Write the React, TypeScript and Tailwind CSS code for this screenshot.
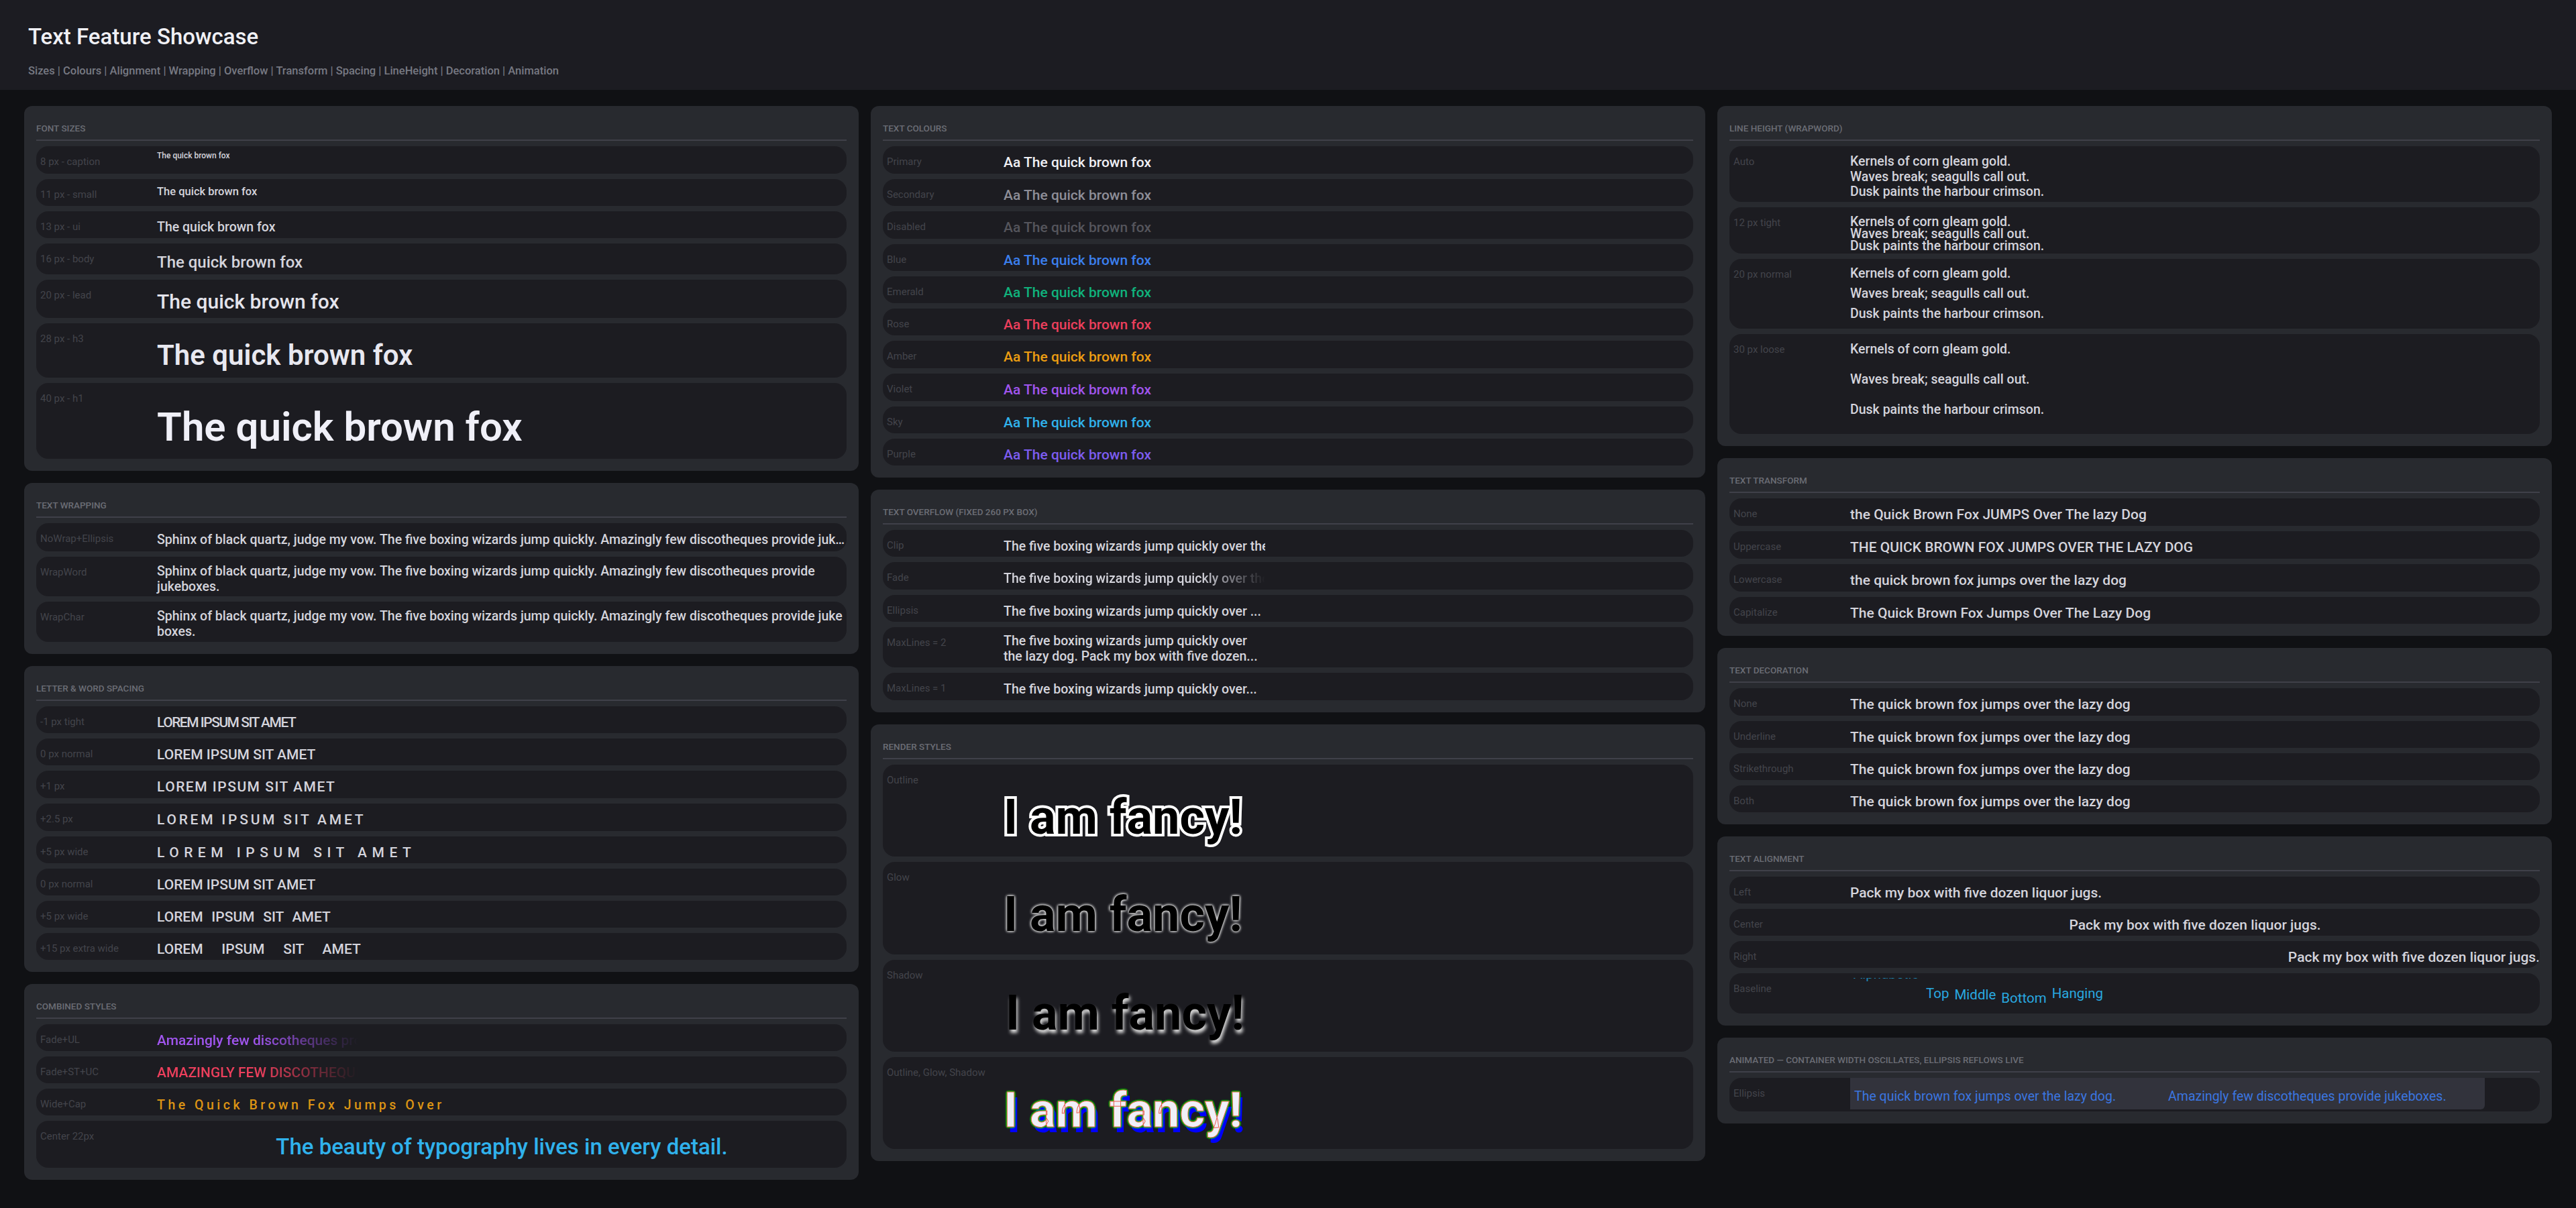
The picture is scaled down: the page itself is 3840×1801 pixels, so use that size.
import type { ReactNode } from 'react';

const FOX = 'The quick brown fox';
const LOREM = 'LOREM IPSUM SIT AMET';
const FIVE = 'The five boxing wizards jump quickly over the lazy dog. Pack my box with five dozen liquor jugs.';
const SPHINX =
  'Sphinx of black quartz, judge my vow. The five boxing wizards jump quickly. Amazingly few discotheques provide jukeboxes.';
const DECORATION = 'The quick brown fox jumps over the lazy dog';
const PACK = 'Pack my box with five dozen liquor jugs.';
const AMAZING = 'Amazingly few discotheques provide jukeboxes.';

function Panel({ title, children }: { title: string; children: ReactNode }) {
  return (
    <section className="rounded-[12px] bg-[#282a2f] px-[18px] pb-[18px] pt-[24px]">
      <h2 className="text-[13.5px] font-medium uppercase leading-[18px] text-[#6b6d75]">{title}</h2>
      <div className="mb-[8px] mt-[8px] h-[2px] bg-[#3f4049]" />
      <div className="flex flex-col gap-[8px]">{children}</div>
    </section>
  );
}

function Row({
  label,
  size = 'h-[40px]',
  top = 'pt-[12.5px]',
  children,
}: {
  label: string;
  size?: string;
  top?: string;
  children: ReactNode;
}) {
  return (
    <div className={`flex items-start overflow-hidden rounded-[18px] bg-[#1c1c21] ${size}`}>
      <div className="mt-[12.5px] w-[180px] shrink-0 whitespace-nowrap pl-[6px] text-[15px] leading-[20px] text-[#43444b]">
        {label}
      </div>
      <div className={`min-w-0 flex-1 text-[19.5px] font-medium leading-[23px] text-[#d4d4dc] ${top}`}>{children}</div>
    </div>
  );
}

const SIZE_ROWS = [
  { label: '8 px - caption', size: 'h-[41px]', top: 'pt-[7px]', text: 'text-[12px] leading-[14px]' },
  { label: '11 px - small', size: 'h-[40px]', top: 'pt-[9px]', text: 'text-[16.5px] leading-[20px]' },
  { label: '13 px - ui', size: 'h-[40px]', top: 'pt-[11.5px]', text: 'text-[19.5px] leading-[23px]' },
  { label: '16 px - body', size: 'h-[46px]', top: 'pt-[13.5px]', text: 'text-[24px] leading-[28px]' },
  { label: '20 px - lead', size: 'h-[57px]', top: 'pt-[15px]', text: 'text-[30px] leading-[35px] text-[#e4e4ec]' },
  { label: '28 px - h3', size: 'h-[81px]', top: 'pt-[22.5px]', text: 'text-[42px] font-semibold leading-[49px] text-[#e8e8f0]' },
  { label: '40 px - h1', size: 'h-[113px]', top: 'pt-[30.5px]', text: 'text-[60px] font-semibold leading-[70px] text-[#f0f0f8]' },
];

const COLOUR_ROWS = [
  { label: 'Primary', size: 'h-[41px]', text: 'text-[#f0f0f5]' },
  { label: 'Secondary', size: 'h-[40px]', text: 'text-[#8e8e98]' },
  { label: 'Disabled', size: 'h-[41px]', text: 'text-[#55555c]' },
  { label: 'Blue', size: 'h-[40px]', text: 'text-[#3b7fee]' },
  { label: 'Emerald', size: 'h-[40px]', text: 'text-[#10b27c]' },
  { label: 'Rose', size: 'h-[40px]', text: 'text-[#ec3f5c]' },
  { label: 'Amber', size: 'h-[41px]', text: 'text-[#ec9d12]' },
  { label: 'Violet', size: 'h-[41px]', text: 'text-[#a055ee]' },
  { label: 'Sky', size: 'h-[40px]', text: 'text-[#30b2ec]' },
  { label: 'Purple', size: 'h-[40px]', text: 'text-[#7c5cf0]' },
];

const SPACING_ROWS = [
  { label: '-1 px tight', size: 'h-[40px]', text: 'tracking-[-1.5px]' },
  { label: '0 px normal', size: 'h-[40px]', text: 'tracking-[0px]' },
  { label: '+1 px', size: 'h-[41px]', text: 'tracking-[1.5px]' },
  { label: '+2.5 px', size: 'h-[41px]', text: 'tracking-[3.75px]' },
  { label: '+5 px wide', size: 'h-[40px]', text: 'tracking-[7.5px]' },
  { label: '0 px normal', size: 'h-[40px]', text: '[word-spacing:0px]' },
  { label: '+5 px wide', size: 'h-[40px]', text: '[word-spacing:7.5px]' },
  { label: '+15 px extra wide', size: 'h-[40px]', text: '[word-spacing:22.5px]' },
];

const LINE_ROWS = [
  { label: 'Auto', size: 'h-[83px]', top: 'pt-[12px]', text: 'leading-[22.5px]' },
  { label: '12 px tight', size: 'h-[69px]', top: 'pt-[13px]', text: 'leading-[18px]' },
  { label: '20 px normal', size: 'h-[104px]', top: 'pt-[6.5px]', text: 'leading-[30px]' },
  { label: '30 px loose', size: 'h-[149px]', top: 'pt-[0px]', text: 'leading-[45px]' },
];

const FANCY = 'text-[72px] font-bold leading-[84px] whitespace-nowrap';
const LARGE = 'text-[21px]';

export default function App() {
  return (
    <div className="min-h-[1801px] bg-[#101114] [font-family:Roboto,sans-serif]">
      <header className="h-[134px] bg-[#1c1c22] pl-[42px] pt-[35px]">
        <h1 className="text-[33px] font-medium leading-[40px] text-[#f0f0f5]">Text Feature Showcase</h1>
        <p className="mt-[21px] text-[16.5px] font-medium leading-[20px] text-[#777982]">
          Sizes | Colours | Alignment | Wrapping | Overflow | Transform | Spacing | LineHeight | Decoration | Animation
        </p>
      </header>

      <main className="grid grid-cols-3 items-start gap-x-[18px] px-[36px] pt-[24px]">
        <div className="flex flex-col gap-[18px]">
          <Panel title="Font sizes">
            {SIZE_ROWS.map((row) => (
              <Row key={row.label} label={row.label} size={row.size} top={row.top}>
                <div className={row.text}>{FOX}</div>
              </Row>
            ))}
          </Panel>

          <Panel title="Text wrapping">
            <Row label="NoWrap+Ellipsis" size="h-[42px]">
              <div className="truncate">{SPHINX}</div>
            </Row>
            <Row label="WrapWord" size="h-[59px]" top="pt-[10px]">
              <div>{SPHINX}</div>
            </Row>
            <Row label="WrapChar" size="h-[60px]" top="pt-[10px]">
              <div className="break-all">{SPHINX}</div>
            </Row>
          </Panel>

          <Panel title="Letter & word spacing">
            {SPACING_ROWS.map((row) => (
              <Row key={row.text} label={row.label} size={row.size}>
                <div className={`whitespace-nowrap ${LARGE} ${row.text}`}>{LOREM}</div>
              </Row>
            ))}
          </Panel>

          <Panel title="Combined styles">
            <Row label="Fade+UL">
              <div className="w-[300px] overflow-hidden whitespace-nowrap text-[21px] text-[#a055ee] [mask-image:linear-gradient(to_right,black_50%,transparent)]">
                {AMAZING}
              </div>
            </Row>
            <Row label="Fade+ST+UC">
              <div className="w-[300px] overflow-hidden whitespace-nowrap text-[21px] uppercase text-[#ec3f5c] [mask-image:linear-gradient(to_right,black_50%,transparent)]">
                {AMAZING}
              </div>
            </Row>
            <Row label="Wide+Cap">
              <div className="whitespace-nowrap tracking-[4.5px] text-[#dc9414]">The Quick Brown Fox Jumps Over</div>
            </Row>
            <Row label="Center 22px" size="h-[70px]" top="pt-[18.5px]">
              <div className="text-center text-[33px] leading-[39px] text-[#30b2ec]">
                The beauty of typography lives in every detail.
              </div>
            </Row>
          </Panel>
        </div>

        <div className="flex flex-col gap-[18px]">
          <Panel title="Text colours">
            {COLOUR_ROWS.map((row) => (
              <Row key={row.label} label={row.label} size={row.size}>
                <div className={`${LARGE} ${row.text}`}>Aa {FOX}</div>
              </Row>
            ))}
          </Panel>

          <Panel title="Text overflow (fixed 260 px box)">
            <Row label="Clip">
              <div className="w-[390px] overflow-hidden whitespace-nowrap">{FIVE}</div>
            </Row>
            <Row label="Fade" size="h-[41px]">
              <div className="w-[390px] overflow-hidden whitespace-nowrap [mask-image:linear-gradient(to_right,black_75%,transparent)]">
                {FIVE}
              </div>
            </Row>
            <Row label="Ellipsis">
              <div className="w-[390px] overflow-hidden whitespace-nowrap">The five boxing wizards jump quickly over ...</div>
            </Row>
            <Row label="MaxLines = 2" size="h-[60px]" top="pt-[9px]">
              <div className="w-[390px]">
                The five boxing wizards jump quickly over the lazy dog. Pack my box with five dozen...
              </div>
            </Row>
            <Row label="MaxLines = 1" size="h-[41px]">
              <div className="w-[390px] whitespace-nowrap">The five boxing wizards jump quickly over...</div>
            </Row>
          </Panel>

          <Panel title="Render styles">
            <Row label="Outline" size="h-[137px]" top="pt-[37px]">
              <div className={`${FANCY} text-black [-webkit-text-stroke:8px_white] [paint-order:stroke_fill]`}>I am fancy!</div>
            </Row>
            <Row label="Glow" size="h-[138px]" top="pt-[37px]">
              <div className={`${FANCY} text-black [text-shadow:0_0_2px_#b0b0b0,0_0_4px_#ffffff,0_0_4px_#ffffff]`}>I am fancy!</div>
            </Row>
            <Row label="Shadow" size="h-[137px]" top="pt-[38px]">
              <div className={`${FANCY} ml-[3px] text-black [text-shadow:2px_5px_5px_#d8d8d8]`}>I am fancy!</div>
            </Row>
            <Row label="Outline, Glow, Shadow" size="h-[137px]" top="pt-[38px]">
              <div
                className={`${FANCY} text-[#f0f0f8] [-webkit-text-stroke:1px_#e86050] [text-shadow:0_0_3px_#00e000,0_0_3px_#00e000,0_0_3px_#00e000,0_0_3px_#00e000,0_0_3px_#00e000,4.5px_7.5px_0_#0000ff]`}
              >
                I am fancy!
              </div>
            </Row>
          </Panel>
        </div>

        <div className="flex flex-col gap-[18px]">
          <Panel title="Line height (wrapword)">
            {LINE_ROWS.map((row) => (
              <Row key={row.label} label={row.label} size={row.size} top={row.top}>
                <div className={row.text}>
                  <div>Kernels of corn gleam gold.</div>
                  <div>Waves break; seagulls call out.</div>
                  <div>Dusk paints the harbour crimson.</div>
                </div>
              </Row>
            ))}
          </Panel>

          <Panel title="Text transform">
            <Row label="None" size="h-[41px]">
              <div className={LARGE}>the Quick Brown Fox JUMPS Over The lazy Dog</div>
            </Row>
            <Row label="Uppercase" size="h-[41px]">
              <div className={`${LARGE} uppercase`}>the quick brown fox jumps over the lazy dog</div>
            </Row>
            <Row label="Lowercase" size="h-[41px]">
              <div className={`${LARGE} lowercase`}>the quick brown fox jumps over the lazy dog</div>
            </Row>
            <Row label="Capitalize">
              <div className={`${LARGE} capitalize`}>the quick brown fox jumps over the lazy dog</div>
            </Row>
          </Panel>

          <Panel title="Text decoration">
            <Row label="None" size="h-[41px]">
              <div className={LARGE}>{DECORATION}</div>
            </Row>
            <Row label="Underline">
              <div className={LARGE}>{DECORATION}</div>
            </Row>
            <Row label="Strikethrough">
              <div className={LARGE}>{DECORATION}</div>
            </Row>
            <Row label="Both">
              <div className={LARGE}>{DECORATION}</div>
            </Row>
          </Panel>

          <Panel title="Text alignment">
            <Row label="Left">
              <div className={LARGE}>{PACK}</div>
            </Row>
            <Row label="Center">
              <div className={`${LARGE} text-center`}>{PACK}</div>
            </Row>
            <Row label="Right">
              <div className={`${LARGE} text-right`}>{PACK}</div>
            </Row>
            <Row label="Baseline" size="h-[60px]" top="pt-[5px]">
              <div className="relative h-[55px] text-[20.5px] font-normal text-[#29a9e0]">
                {/* only the baseline and the descender of this word stay inside the clip */}
                <div className="absolute left-[5px] top-[1.5px] h-[5px] overflow-hidden text-[#1f86b3]">
                  <div className="-mt-[18px] leading-[24px]">Alphabetic</div>
                </div>
                <div className="flex items-start gap-[8px] pl-[113px] leading-[24px]">
                  <span className="mt-[13px]">Top</span>
                  <span className="mt-[15px]">Middle</span>
                  <span className="mt-[20px]">Bottom</span>
                  <span className="mt-[13px]">Hanging</span>
                </div>
              </div>
            </Row>
          </Panel>

          <Panel title="Animated — container width oscillates, ellipsis reflows live">
            <Row label="Ellipsis" size="h-[50px]" top="pt-[0px]">
              <div className="flex h-[47px] w-[946px] items-center gap-[78px] overflow-hidden rounded-br-[6px] bg-[#32333c] pl-[6px] pt-[7px] font-normal text-[#3b76e0]">
                <span className="whitespace-nowrap">The quick brown fox jumps over the lazy dog.</span>
                <span className="whitespace-nowrap">{AMAZING}</span>
              </div>
            </Row>
          </Panel>
        </div>
      </main>
    </div>
  );
}
